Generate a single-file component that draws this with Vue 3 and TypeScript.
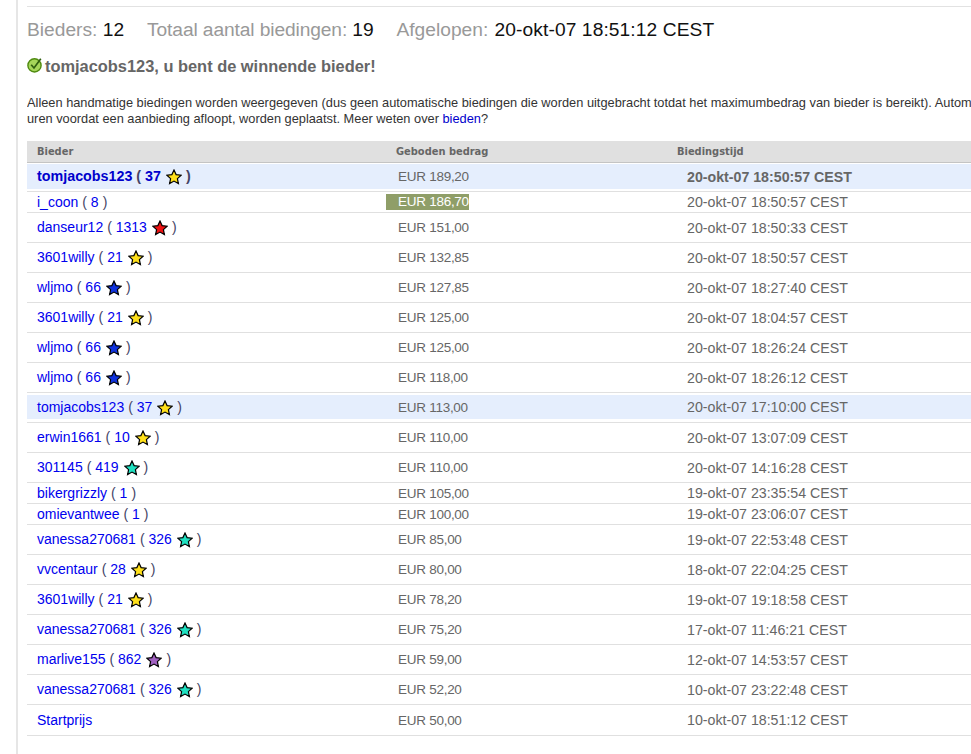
<script setup lang="ts">
interface Row { name: string; score?: number; star?: string; amount: string; time: string; kind: string; }
const c: Record<string, string> = { y: '#ffe01a', r: '#ee1111', b: '#1133dd', t: '#1fe0c0', p: '#a060c0' };
const rows: Row[] = [
  { name: 'i_coon', score: 8, amount: 'EUR 186,70', time: '20-okt-07 18:50:57 CEST', kind: 'short' },
  { name: 'danseur12', score: 1313, star: 'r', amount: 'EUR 151,00', time: '20-okt-07 18:50:33 CEST', kind: '' },
  { name: '3601willy', score: 21, star: 'y', amount: 'EUR 132,85', time: '20-okt-07 18:50:57 CEST', kind: '' },
  { name: 'wljmo', score: 66, star: 'b', amount: 'EUR 127,85', time: '20-okt-07 18:27:40 CEST', kind: '' },
  { name: '3601willy', score: 21, star: 'y', amount: 'EUR 125,00', time: '20-okt-07 18:04:57 CEST', kind: '' },
  { name: 'wljmo', score: 66, star: 'b', amount: 'EUR 125,00', time: '20-okt-07 18:26:24 CEST', kind: '' },
  { name: 'wljmo', score: 66, star: 'b', amount: 'EUR 118,00', time: '20-okt-07 18:26:12 CEST', kind: '' },
  { name: 'tomjacobs123', score: 37, star: 'y', amount: 'EUR 113,00', time: '20-okt-07 17:10:00 CEST', kind: 'mine' },
  { name: 'erwin1661', score: 10, star: 'y', amount: 'EUR 110,00', time: '20-okt-07 13:07:09 CEST', kind: '' },
  { name: '301145', score: 419, star: 't', amount: 'EUR 110,00', time: '20-okt-07 14:16:28 CEST', kind: '' },
  { name: 'bikergrizzly', score: 1, amount: 'EUR 105,00', time: '19-okt-07 23:35:54 CEST', kind: 'short' },
  { name: 'omievantwee', score: 1, amount: 'EUR 100,00', time: '19-okt-07 23:06:07 CEST', kind: 'short' },
  { name: 'vanessa270681', score: 326, star: 't', amount: 'EUR 85,00', time: '19-okt-07 22:53:48 CEST', kind: '' },
  { name: 'vvcentaur', score: 28, star: 'y', amount: 'EUR 80,00', time: '18-okt-07 22:04:25 CEST', kind: '' },
  { name: '3601willy', score: 21, star: 'y', amount: 'EUR 78,20', time: '19-okt-07 19:18:58 CEST', kind: '' },
  { name: 'vanessa270681', score: 326, star: 't', amount: 'EUR 75,20', time: '17-okt-07 11:46:21 CEST', kind: '' },
  { name: 'marlive155', score: 862, star: 'p', amount: 'EUR 59,00', time: '12-okt-07 14:53:57 CEST', kind: '' },
  { name: 'vanessa270681', score: 326, star: 't', amount: 'EUR 52,20', time: '10-okt-07 23:22:48 CEST', kind: '' },
  { name: 'Startprijs', amount: 'EUR 50,00', time: '10-okt-07 18:51:12 CEST', kind: 'start' },
];
const starPts = '8,1 10.1,5.6 15.1,6.2 11.4,9.6 12.4,14.6 8,12.1 3.6,14.6 4.6,9.6 .9,6.2 5.9,5.6';
</script>

<template>
  <div class="page">
    <main class="content">
      <div class="stats">
        <span>Bieders: <b>12</b></span>
        <span class="total">Totaal aantal biedingen: <b>19</b></span>
        <span>Afgelopen: <b class="date">20-okt-07 18:51:12 CEST</b></span>
      </div>
      <h2 class="win">
        <svg class="check" viewBox="0 0 16 16" width="16" height="16">
          <circle cx="7.5" cy="8.4" r="6.6" fill="#a5d65a" stroke="#4f8a10" stroke-width="1.4" />
          <path d="M4.2 7.8 7 11 13.8 1.8" fill="none" stroke="#2f5f10" stroke-width="1.7" />
        </svg>
        <span>tomjacobs123, u bent de winnende bieder!</span>
      </h2>
      <p class="note">Alleen handmatige biedingen worden weergegeven (dus geen automatische biedingen die worden uitgebracht totdat het maximumbedrag van bieder is bereikt). Automatische biedingen die binnen enkele<br>uren voordat een aanbieding afloopt, worden geplaatst. Meer weten over <a>bieden</a>?</p>
      <div class="table">
        <div class="head"><span>Bieder</span><span>Geboden bedrag</span><span>Biedingstijd</span></div>
        <div class="row first">
          <div class="inner">
            <span class="who"><a>tomjacobs123</a><span class="paren">(</span> <a>37</a><svg class="star" viewBox="0 0 16 16" width="16" height="16"><polygon :points="starPts" :fill="c.y" stroke="#000" stroke-width="1.2" /></svg><span class="close">)</span></span>
            <span class="amt">EUR 189,20</span>
            <span class="time">20-okt-07 18:50:57 CEST</span>
          </div>
        </div>
        <div v-for="(r, i) in rows" :key="i" class="row" :class="r.kind">
          <div class="inner">
            <span class="who"><a>{{ r.name }}</a><template v-if="r.score"><span class="paren">(</span> <a>{{ r.score }}</a><svg v-if="r.star" class="star" viewBox="0 0 16 16" width="16" height="16"><polygon :points="starPts" :fill="c[r.star]" stroke="#000" stroke-width="1.2" /></svg><span class="close">)</span></template></span>
            <span class="amt"><i v-if="i === 0" class="flash">{{ r.amount }}</i><template v-else>{{ r.amount }}</template></span>
            <span class="time">{{ r.time }}</span>
          </div>
        </div>
      </div>
    </main>
  </div>
</template>

<style>
html, body { margin: 0; background: #fff; overflow: hidden; }
</style>

<style scoped>
.page { width: 971px; height: 754px; overflow: hidden; box-sizing: border-box; font-family: "Liberation Sans", Arial, sans-serif; color: #666; background: #fff; padding-left: 16px; }
.content { border-left: 2px solid #e6e6e6; height: 754px; padding-left: 9px; width: 1100px; box-sizing: border-box; padding-top: 6px; }
.stats { border-top: 1px solid #e2e2e2; height: 47px; display: flex; gap: 23px; padding-top: 12px; box-sizing: border-box; font-size: 19.2px; line-height: 22px; color: #999; width: 944px; white-space: nowrap; }
.stats b { font-weight: 400; color: #111; }
.stats .date { margin-left: 1px; letter-spacing: 0.09px; }
.total { letter-spacing: -0.11px; }
.win { margin: 0; height: 26px; display: flex; align-items: center; gap: 2px; font-size: 16.4px; line-height: 20px; font-weight: 700; color: #666; white-space: nowrap; }
.check { margin-top: -3px; }
.note { margin: 0; padding-top: 16px; font-size: 12.8px; line-height: 16px; color: #333; height: 62px; box-sizing: border-box; white-space: nowrap; width: 944px; overflow: hidden; }
.note a { color: #00c; }
.table { width: 944px; }
.head { height: 21px; background: #e0e0e0; border-bottom: 1px solid #c4c4c4; display: grid; grid-template-columns: 359px 281px 1fr; padding-left: 10px; font-family: "DejaVu Sans", sans-serif; font-size: 9.9px; font-weight: 700; color: #666; line-height: 21px; }
.row { height: 29px; border-bottom: 1px solid #e0e0e0; }
.inner { height: 100%; display: grid; grid-template-columns: 361px 289px 1fr; padding-left: 10px; align-items: center; font-size: 14px; color: #666; white-space: nowrap; }
.amt { font-size: 13.5px; letter-spacing: -0.27px; }
.time { font-size: 14.2px; }
.who a { color: #00e; }
.paren { margin-left: 4px; color: #446; }
.close { color: #446; }
a + .close { margin-left: 4px; }
.star { vertical-align: -4px; margin: 0 4px 0 5px; }
.first { box-sizing: border-box; height: 29px; padding-top: 1px; padding-bottom: 2px; }
.first .inner { height: 25px; background: #e5eefd; font-weight: 700; }
.first .who { font-size: 14.3px; }
.first .who a { color: #00c; }
.first .amt { font-weight: 400; }
.short { height: 20px; }
.mine { box-sizing: border-box; height: 30px; padding-top: 2px; padding-bottom: 3px; }
.mine .inner { background: #e5eefd; }
.start { height: 30px; }
.flash { display: inline-block; font-style: normal; background: #8f9e68; color: #fff; margin-left: -12px; padding-left: 12px; height: 16px; line-height: 16px; }
</style>
